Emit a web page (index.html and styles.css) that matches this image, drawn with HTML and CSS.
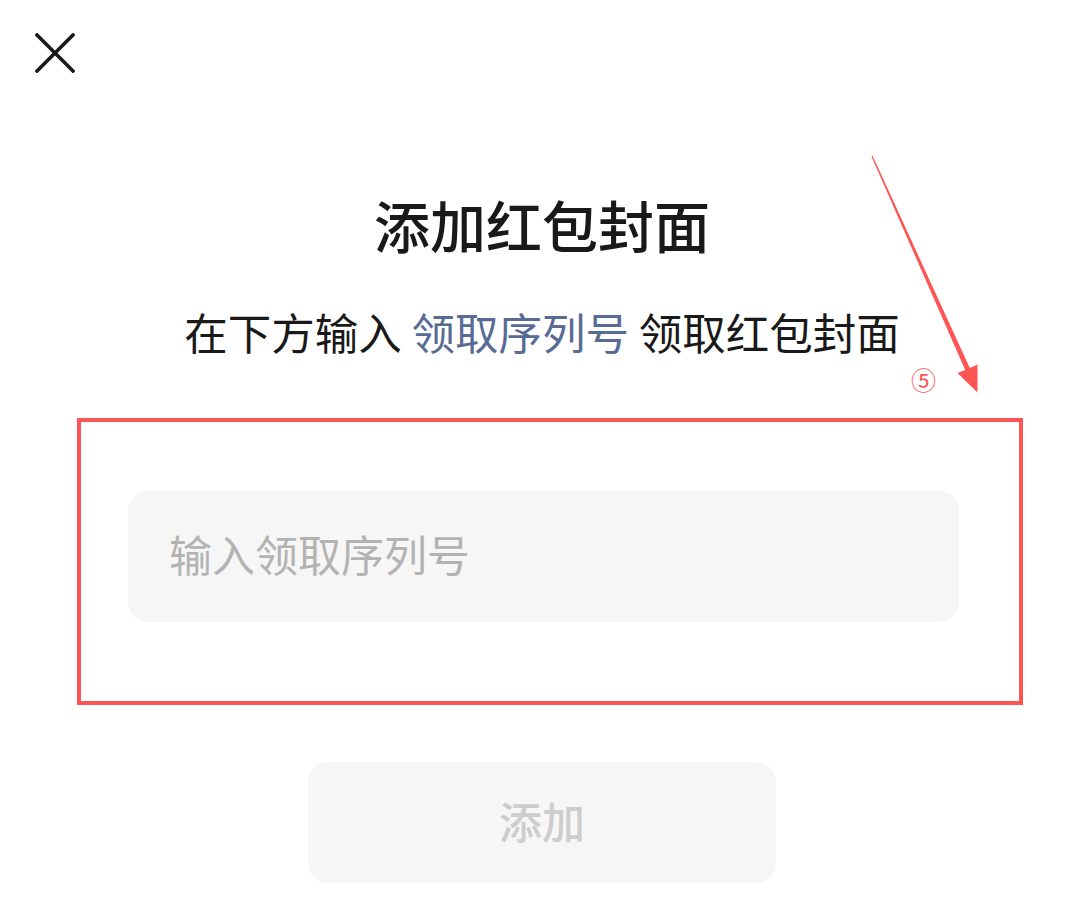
FILE: index.html
```
<!DOCTYPE html>
<html lang="zh-CN">
<head>
<meta charset="utf-8">
<title>添加红包封面</title>
<link rel="stylesheet" href="styles.css">
</head>
<body>
<div class="page">
  <header class="top">
    <button class="close" aria-label="关闭">
      <svg viewBox="0 0 40 40" width="40" height="40"><path d="M2 2 L38 38 M38 2 L2 38" stroke="#1a1a1a" stroke-width="3.6" stroke-linecap="square" fill="none"/></svg>
    </button>
  </header>
  <main class="content">
    <h1 class="title">添加红包封面</h1>
    <p class="subtitle">在下方输入 <span class="link">领取序列号</span> 领取红包封面</p>
    <div class="annot-box">
      <input class="field" type="text" placeholder="输入领取序列号">
    </div>
    <button class="add">添加</button>
  </main>
  <svg class="arrow" viewBox="850 150 140 250" width="140" height="250"><polygon points="871.4,156.3 872.6,155.7 969.8,368 977.5,364.5 977.5,392.5 957.5,373 965.2,370" fill="#fd5454"/></svg>
  <span class="step">⑤</span>
</div>
</body>
</html>
```
FILE: styles.css
```
html, body {
  margin: 0;
  padding: 0;
  background: #ffffff;
}
body {
  font-family: "Noto Sans CJK SC", "Noto Sans", sans-serif;
  color: #191919;
}
.page {
  position: relative;
  width: 1084px;
  height: 899px;
  overflow: hidden;
}
.top {
  padding: 33px 0 0 35px;
  height: 40px;
}
.close {
  display: block;
  width: 40px;
  height: 40px;
  padding: 0;
  border: 0;
  background: none;
}
.close svg {
  display: block;
}
.content {
  display: flex;
  flex-direction: column;
}
.title {
  margin: 123px 0 0;
  font-size: 56px;
  line-height: 56px;
  font-weight: 500;
  text-align: center;
  color: #191919;
}
.subtitle {
  margin: 58px 0 0;
  font-size: 43.5px;
  line-height: 44px;
  text-align: center;
  color: #191919;
}
.link {
  color: #576b95;
}
.annot-box {
  margin: 64px 61px 0 77px;
  border: 4px solid #fd5454;
  padding: 69px 60px 79px 47px;
}
.field {
  display: block;
  box-sizing: border-box;
  width: 100%;
  height: 131px;
  border: 0;
  outline: none;
  border-radius: 20px;
  background: #f6f6f6;
  padding: 0 0 7px 41px;
  font-family: "Noto Sans CJK SC", sans-serif;
  font-size: 43px;
  color: #191919;
}
.field::placeholder {
  color: #b3b3b3;
}
.add {
  align-self: center;
  margin-top: 57px;
  width: 468px;
  height: 121px;
  border: 0;
  border-radius: 20px;
  background: #f6f6f6;
  padding: 0 0 6px;
  font-family: "Noto Sans CJK SC", sans-serif;
  font-size: 43px;
  font-weight: 500;
  color: #cdcdcd;
}
.arrow {
  position: absolute;
  left: 850px;
  top: 150px;
}
.step {
  position: absolute;
  left: 911px;
  top: 364px;
  font-family: "Noto Sans CJK SC", sans-serif;
  font-size: 25px;
  line-height: 30px;
  color: #fd5454;
}
```
